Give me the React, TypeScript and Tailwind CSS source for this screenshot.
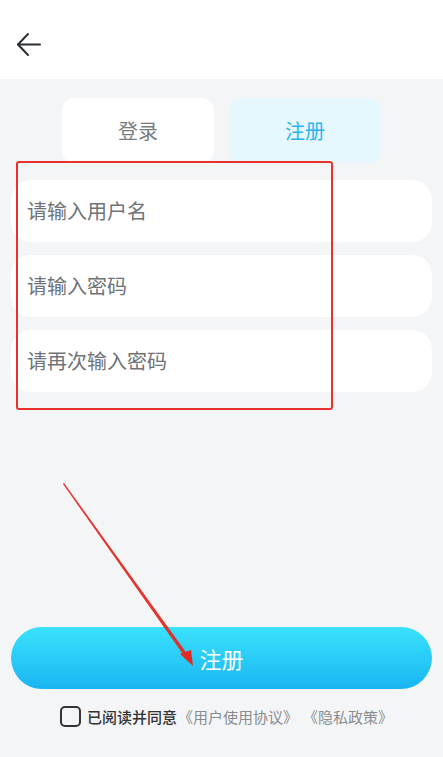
import React from "react";

const inputs = ["请输入用户名", "请输入密码", "请再次输入密码"];

export default function App() {
  return (
    <div
      className="relative w-[443px] h-[757px] bg-[#f4f5f7] flex flex-col overflow-hidden"
      style={{ fontFamily: '"Noto Sans CJK SC", "Noto Sans", sans-serif' }}
    >
      {/* header */}
      <div className="h-[79px] bg-white flex items-center pl-[16px] pt-[10px] shrink-0">
        <svg width="26" height="26" viewBox="0 0 26 26" fill="none" stroke="#2b2f33" strokeWidth="2" strokeLinecap="round" strokeLinejoin="round">
          <path d="M2 12.5 H24" />
          <path d="M12 2 L2 12.5 L12 23" />
        </svg>
      </div>

      {/* tabs */}
      <div className="flex justify-center gap-[15px] pt-[19px]">
        <div className="w-[152px] h-[65px] rounded-[12px] bg-white flex items-center justify-center text-[20px] text-[#7a7d80]">
          登录
        </div>
        <div className="w-[152px] h-[65px] rounded-[12px] bg-[#e6f7fd] flex items-center justify-center text-[20px] text-[#2ab4ec]">
          注册
        </div>
      </div>

      {/* inputs */}
      <div className="flex flex-col gap-[13px] mx-[11px] mt-[17px]">
        {inputs.map((p) => (
          <div key={p} className="h-[62px] rounded-[20px] bg-white flex items-center pl-[16px] text-[20px] text-[#6f7377]">
            {p}
          </div>
        ))}
      </div>

      {/* submit */}
      <div className="mt-[235px] mx-[11px] h-[62px] rounded-full bg-gradient-to-b from-[#3ae2fc] to-[#19b5f2] flex items-center justify-center text-white text-[22px]">
        注册
      </div>

      {/* agreement */}
      <div className="flex items-center pl-[60px] mt-[17px] text-[15px] leading-[21px]">
        <div className="w-[21px] h-[21px] rounded-[5px] border-2 border-[#333] mr-[6px] shrink-0" />
        <span className="text-[#333] font-medium">已阅读并同意</span>
        <span className="text-[#8a8d90] ml-[1px]">《用户使用协议》</span>
        <span className="text-[#8a8d90] ml-[5px]">《隐私政策》</span>
      </div>

      {/* annotation box */}
      <div className="absolute left-[16px] top-[161px] w-[317px] h-[249px] border-2 border-[#e8322b] rounded-[3px] pointer-events-none" />

      {/* annotation arrow */}
      <svg className="absolute left-0 top-0 pointer-events-none" width="443" height="757" viewBox="0 0 443 757">
        <polygon points="63,484 64,483 188,655 185,657" fill="#e32a22" opacity="0.95" />
        <polygon points="193,666 180,654 191,650" fill="#e32a22" />
      </svg>
    </div>
  );
}
